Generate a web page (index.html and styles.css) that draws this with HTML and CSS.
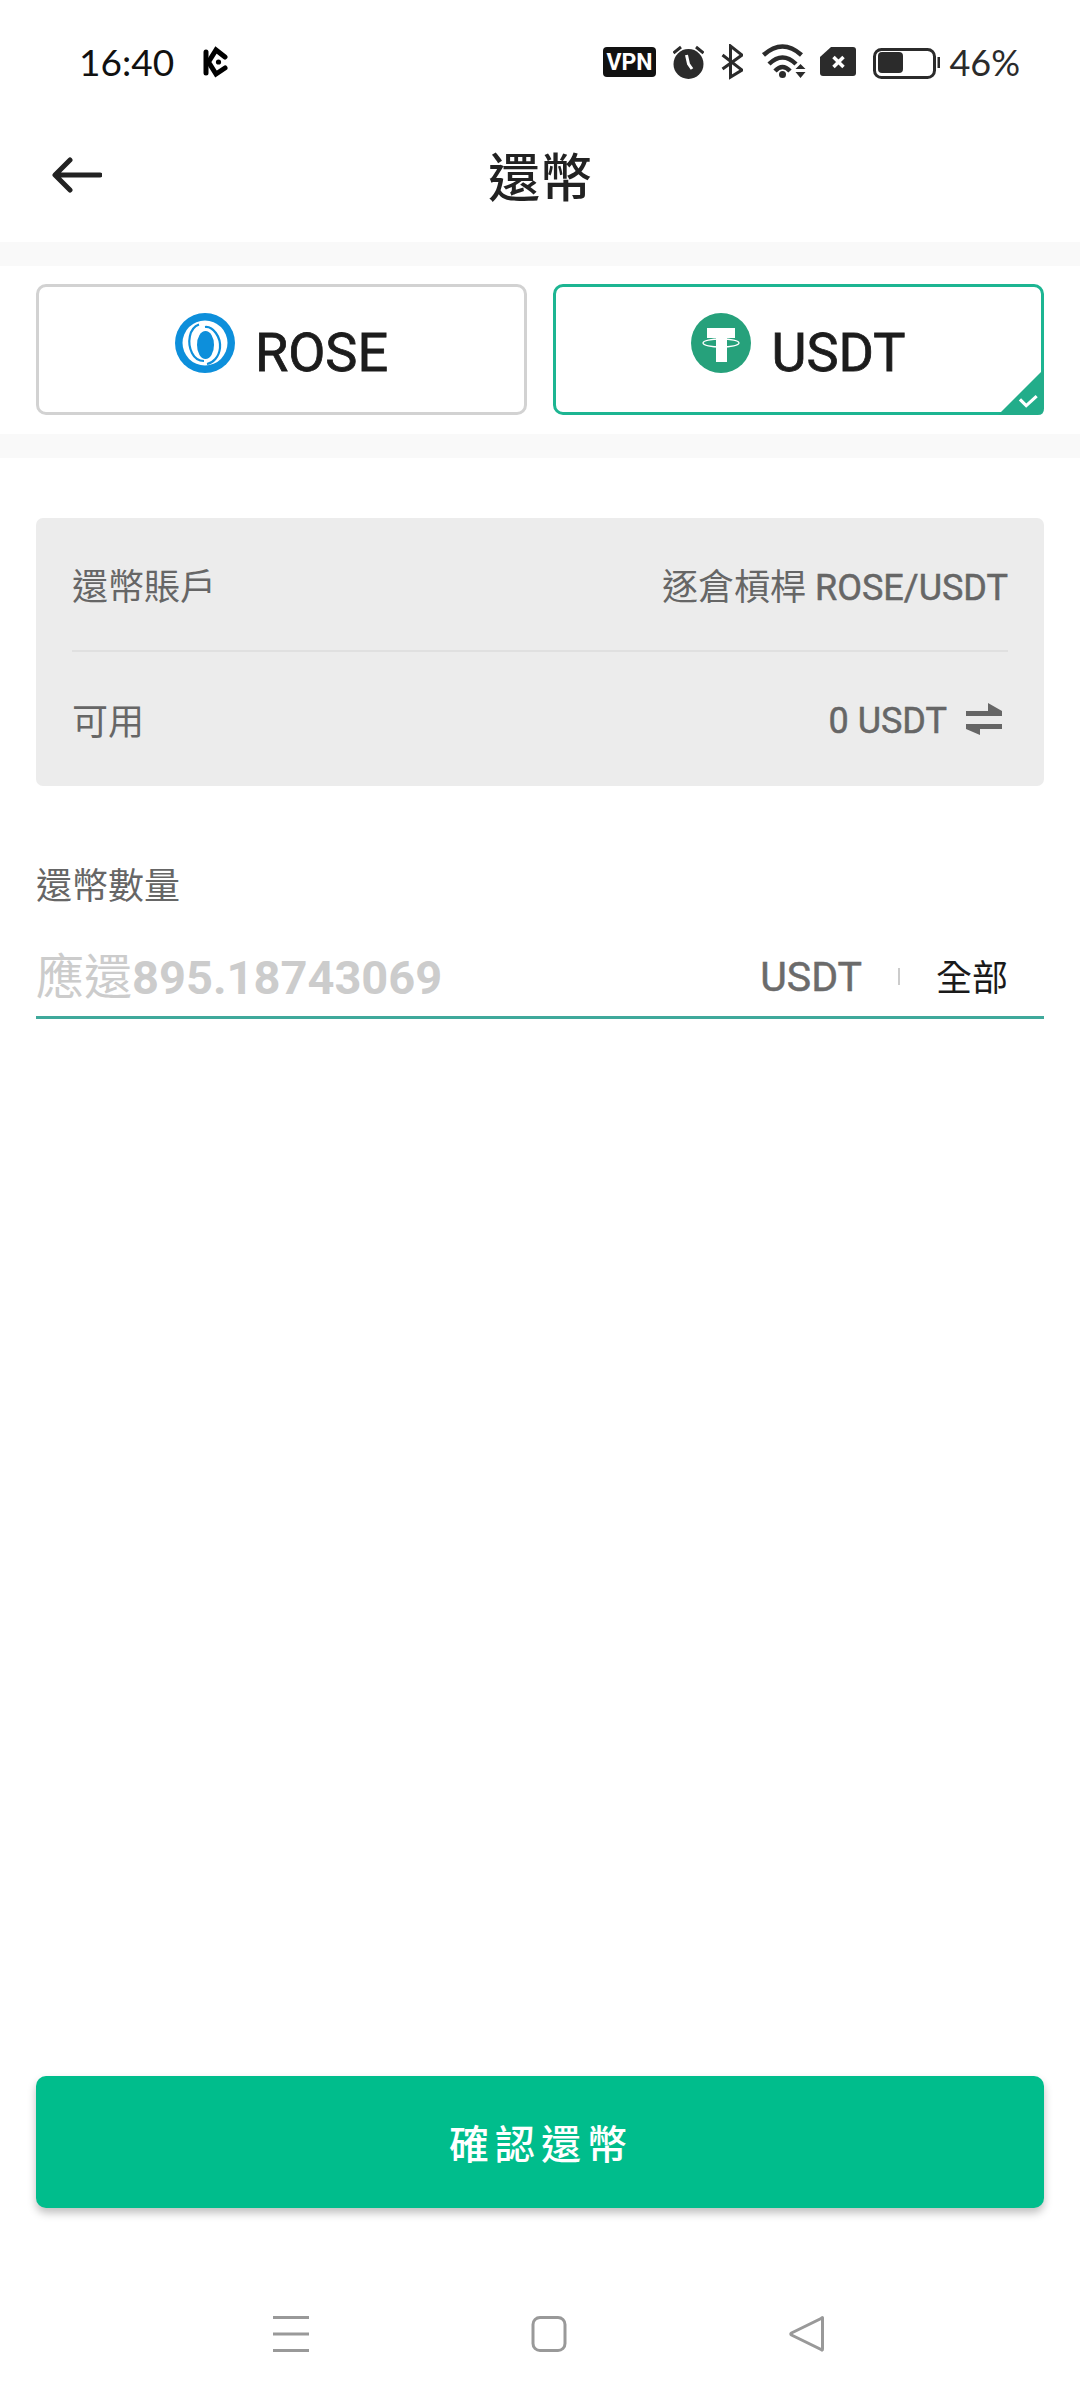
FILE: index.html
```html
<!DOCTYPE html>
<html lang="zh-Hant">
<head>
<meta charset="utf-8">
<title>還幣</title>
<link rel="stylesheet" href="styles.css">
</head>
<body>
<div class="screen">
  <div class="status">
    <span class="time">16:40</span>
    <svg class="ic ic-kc" viewBox="0 0 25 36"><path d="M3 8V29" class="kc"/><path d="M22 13 13 6 5.5 18 13 30 22 24" class="kc"/><circle cx="15.5" cy="18" r="2.6" fill="#000"/></svg>
    <div class="status-right">
      <svg class="ic ic-vpn" viewBox="0 0 53 36"><rect x="0" y="3" width="53" height="30" rx="4" fill="#111"/><text x="26.5" y="26" text-anchor="middle" class="vpn-t">VPN</text></svg>
      <svg class="ic ic-alarm" viewBox="0 0 31 36"><circle cx="15.5" cy="20" r="15" fill="#2b2b2b"/><path d="M.5 9 8 3M30.5 9 23 3" class="st3"/><path d="M13.5 11 15.5 20 19 25" fill="none" stroke="#fff" stroke-width="3"/></svg>
      <svg class="ic ic-bt" viewBox="0 0 22 36"><path d="M1.5 11 21 26 9.5 33V2L21 11 1.5 25" class="st3"/></svg>
      <svg class="ic ic-wifi" viewBox="0 0 44 36"><path d="M1.5 11Q20.5-6 39.5 11" class="wf"/><path d="M7 20Q20.5 7 34 20" class="wf"/><path d="M13 27Q20.5 19 28 27" class="wf"/><circle cx="20.5" cy="30.500" r="3.500" fill="#2b2b2b"/><path d="M33.500 25H43.500L38.500 20ZM33.500 28H43.500L38.500 34Z" fill="#2b2b2b"/></svg>
      <svg class="ic ic-sim" viewBox="0 0 36 36"><path d="M11 3H33Q36 3 36 6V29Q36 32 33 32H3Q0 32 0 29V13Z" fill="#2b2b2b"/><path d="M13.500 13 23.500 23M23.500 13 13.500 23" fill="none" stroke="#fff" stroke-width="3.500"/></svg>
      <svg class="ic ic-bat" viewBox="0 0 67 36"><rect x="1.500" y="5.500" width="60" height="28" rx="7" fill="none" stroke="#2b2b2b" stroke-width="3"/><rect x="5" y="8" width="25" height="21" rx="4" fill="#2b2b2b"/><rect x="64.500" y="13" width="2.500" height="11" fill="#2b2b2b"/></svg>
      <span class="pct">46%</span>
    </div>
  </div>

  <header class="topbar">
    <svg class="back" viewBox="0 0 50 36"><path d="M48 18H4M18 3 3 18 18 33" fill="none" stroke="#222" stroke-width="5" stroke-linecap="round" stroke-linejoin="round"/></svg>
    <h1 class="title">還幣</h1>
    <span></span>
  </header>

  <section class="tabs">
    <div class="tab">
      <svg class="coin" viewBox="0 0 60 60"><circle cx="30" cy="30" r="30" fill="#0d8fdb"/><circle cx="30" cy="30" r="22.500" fill="#fff"/><ellipse cx="30.500" cy="32" rx="8.500" ry="14" fill="#0d8fdb"/><path d="M24 11.500C14 15 12 30 17 40 20 46 25 48 29 48" fill="none" stroke="#0d8fdb" stroke-width="2.200"/><path d="M30 14C38 13 46 24 45 35 44 44 38 50 32 51" fill="none" stroke="#0d8fdb" stroke-width="2.200"/></svg>
      <span class="tab-name">ROSE</span>
    </div>
    <div class="tab tab-on">
      <svg class="coin" viewBox="0 0 60 60"><circle cx="30" cy="30" r="30" fill="#26a17b"/><path d="M16 15H44V25H36V49H25V25H16Z" fill="#fff"/><ellipse cx="30" cy="30" rx="18" ry="4" fill="none" stroke="#fff" stroke-width="1.300"/></svg>
      <span class="tab-name">USDT</span>
      <svg class="tick" viewBox="0 0 44 44"><path d="M44 0V38Q44 44 38 44H0Z" fill="#22ad8a"/><path d="M21 29 27 35 37 26" fill="none" stroke="#fff" stroke-width="3"/></svg>
    </div>
  </section>

  <main class="main">
    <div class="panel">
      <div class="row row-line"><span>還幣賬戶</span><span>逐倉槓桿 <span class="lat">ROSE/USDT</span></span></div>
      <div class="row"><span>可用</span><span class="avail"><span class="lat">0 USDT</span><svg class="swap" viewBox="0 0 36 32"><path d="M0 8H36V13H0ZM22 0 36 8H22ZM0 21H36V26H0ZM0 26H14V32Z" fill="#666"/></svg></span></div>
    </div>
    <div class="label">還幣數量</div>
    <div class="field">
      <span class="ph">應還<b>895.18743069</b></span>
      <span class="unit">USDT</span>
      <span class="sep"></span>
      <span class="all">全部</span>
    </div>
  </main>

  <button class="cta">確認還幣</button>

  <nav class="nav">
    <svg class="nav-i" viewBox="0 0 36 36"><path d="M0 1.500H36M0 18H36M0 34.500H36" stroke="#999" stroke-width="3"/></svg>
    <svg class="nav-i" viewBox="0 0 36 36"><rect x="2" y="1.500" width="32" height="33" rx="7" fill="none" stroke="#999" stroke-width="3"/></svg>
    <svg class="nav-i" viewBox="0 0 36 36"><path d="M33.500 2 Q33.500 1 32 2.500L2.500 17Q1 18 2.500 19L32 33.500Q33.500 35 33.500 33Z" fill="none" stroke="#999" stroke-width="3"/></svg>
  </nav>
</div>
</body>
</html>
```
FILE: styles.css
```css
* { box-sizing: border-box; }
html, body { margin: 0; padding: 0; background: #fff; }
body { font-family: Roboto, "Noto Sans CJK TC", sans-serif; }
.screen { width: 1080px; height: 2400px; display: flex; flex-direction: column; }

.status { height: 124px; padding: 44px 60px 0 79px; display: flex; align-items: flex-start; }
.time, .pct { font-family: Lato, sans-serif; font-size: 37px; line-height: 36px; color: #111; }
.pct { font-size: 36px; color: #2b2b2b; margin-left: 9px; }
.ic { height: 36px; display: block; flex: none; }
.ic-kc { width: 25px; margin-left: 29px; }
.status-right { margin-left: auto; display: flex; }
.ic-vpn { width: 53px; }
.ic-alarm { width: 31px; margin-left: 17px; }
.ic-bt { width: 22px; margin-left: 17px; }
.ic-wifi { width: 44px; margin-left: 19px; }
.ic-sim { width: 36px; margin-left: 14px; }
.ic-bat { width: 67px; margin-left: 17px; }
.kc { fill: none; stroke: #000; stroke-width: 5; stroke-linecap: round; }
.st3 { fill: none; stroke: #2b2b2b; stroke-width: 3; }
.wf { fill: none; stroke: #2b2b2b; stroke-width: 4.5; }
.vpn-t { font-family: Roboto, sans-serif; font-weight: 700; font-size: 23px; fill: #fff; }

.topbar { height: 118px; padding: 0 52px; display: grid; grid-template-columns: 1fr auto 1fr; align-items: center; }
.back { width: 50px; height: 36px; display: block; margin-bottom: 16px; }
.title { margin: 0 0 6px; font-size: 52px; line-height: 60px; font-weight: 500; color: #222; }

.tabs { padding: 18px 36px 19px; display: grid; grid-template-columns: 491px 491px; gap: 26px; border-top: 24px solid #f9f9f9; border-bottom: 24px solid #f9f9f9; }
.tab { position: relative; height: 131px; border: 3px solid #d2d2d2; border-radius: 10px; display: flex; justify-content: center; align-items: flex-start; gap: 20px; padding-top: 26px; }
.tab-on { border-color: #1db592; }
.coin { width: 60px; height: 60px; display: block; }
.tab-name { font-size: 54px; font-weight: 400; -webkit-text-stroke: .8px #1c1c1c; line-height: 60px; color: #1c1c1c; margin-top: 10px; }
.tick { position: absolute; right: -3px; bottom: -3px; width: 46px; height: 46px; }

.main { flex: 1; padding: 60px 36px 0; }
.panel { height: 268px; background: #ececec; border-radius: 7px; padding: 0 36px; color: #666; font-size: 36px; }
.row { height: 134px; display: flex; justify-content: space-between; align-items: center; }
.row-line { border-bottom: 2px solid #e0e0e0; }
.lat { font-size: 36px; font-weight: 400; -webkit-text-stroke: .5px #666; }
.avail { display: flex; align-items: center; gap: 19px; margin-right: 6px; }
.avail .lat { margin-top: 3px; }
.swap { width: 36px; height: 32px; display: block; }
.label { margin-top: 76px; font-size: 36px; line-height: 50px; color: #666; }
.field { height: 82px; margin-top: 25px; border-bottom: 3px solid #3fa99b; display: flex; align-items: center; }
.ph { font-size: 48px; color: #ccc; margin: 0 auto 8px 0; }
.ph b { font-size: 47px; font-weight: 700; }
.unit { font-size: 41px; font-weight: 400; -webkit-text-stroke: .5px #6b6b6b; color: #6b6b6b; }
.sep { width: 2px; height: 17px; background: #ccc; margin: 0 36px; }
.all { font-size: 36px; color: #1a1a1a; margin: 0 36px 4px 0; }

.cta { flex: none; margin: 0 36px; width: 1008px; height: 132px; border: 0; border-radius: 10px; background: #00bd8c; color: #fff; font-family: inherit; font-size: 40px; font-weight: 500; letter-spacing: 6px; padding-left: 8px; box-shadow: 0 5px 9px rgba(0,0,0,.25); }

.nav { height: 192px; padding: 108px 0 0 273px; display: flex; gap: 222px; }
.nav-i { width: 36px; height: 36px; display: block; }
```
